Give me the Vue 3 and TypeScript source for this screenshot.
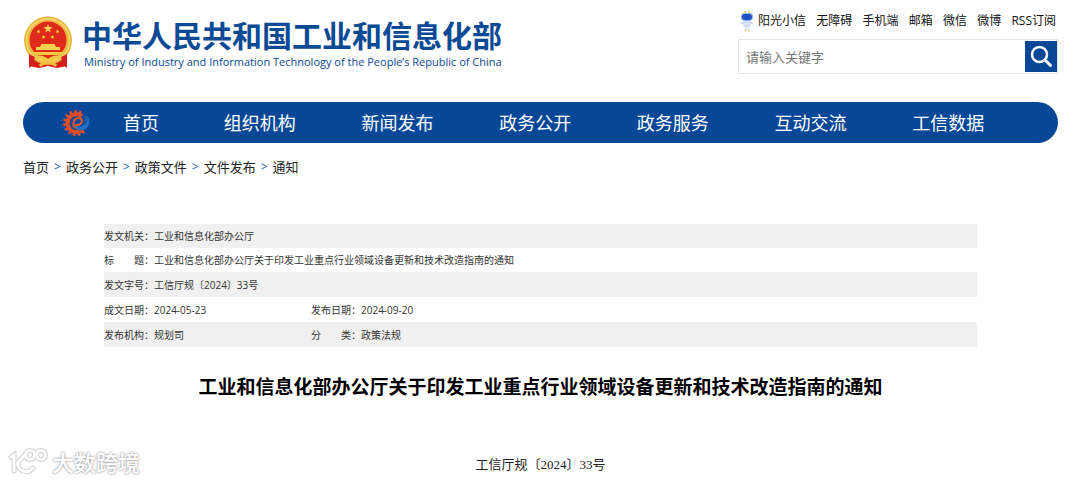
<script setup lang="ts">
interface Field { label: string; value: string }

const quickLinks: string[] = ['无障碍', '手机端', '邮箱', '微信', '微博', 'RSS订阅']
const navItems: string[] = ['首页', '组织机构', '新闻发布', '政务公开', '政务服务', '互动交流', '工信数据']
const crumbs: string[] = ['首页', '政务公开', '政策文件', '文件发布', '通知']
const title = '工业和信息化部办公厅关于印发工业重点行业领域设备更新和技术改造指南的通知'
const rows: Field[][] = [
  [{ label: '发文机关：', value: '工业和信息化部办公厅' }],
  [{ label: '标　　题：', value: title }],
  [{ label: '发文字号：', value: '工信厅规〔2024〕33号' }],
  [{ label: '成文日期：', value: '2024-05-23' }, { label: '发布日期：', value: '2024-09-20' }],
  [{ label: '发布机构：', value: '规划司' }, { label: '分　　类：', value: '政策法规' }],
]
const teeth: number[] = [10, 34, 58, 82, 106, 130, 154, 178, 202, 226, 250]
</script>

<template>
  <div class="page">
    <header class="header">
      <a class="brand" href="#">
        <svg class="emblem" viewBox="0 0 50 54" aria-hidden="true">
          <path d="M7 35L6 50l10 2 9-2 9 2 10-2-1-15z" fill="#d51f1c" />
          <circle cx="25" cy="24.500" r="24" fill="#e9b63c" />
          <circle cx="25" cy="24.500" r="21.500" fill="none" stroke="#f5d266" stroke-width="2" />
          <circle cx="25" cy="24" r="18.500" fill="#df2a1c" />
          <path d="M25 8l1.200 3.100 3.300.1-2.600 2 .9 3.200L25 14.600l-2.800 1.800.9-3.200-2.600-2 3.300-.1z" fill="#f8d94e" />
          <g fill="#f5cf47">
            <path id="star" d="M15.500 13.500l.6 1.300 1.400.1-1.100 1 .4 1.400-1.300-.8-1.300.8.400-1.400-1.100-1 1.400-.1z" />
            <use href="#star" x="19" />
            <use href="#star" x="5" y="5.500" />
            <use href="#star" x="14" y="5.500" />
          </g>
          <path d="M17 31l1.500-3h13l1.500 3h4v3H13v-3z" fill="#f6d34f" />
          <path d="M8 36h34l-2 3H10z" fill="#f3c943" />
          <path d="M6 38l6 3c-1 5-2 8-6 11zM44 38l-6 3c1 5 2 8 6 11z" fill="#d51f1c" />
          <path d="M11 41c6-3 10-1 14 2 4-3 8-5 14-2-3 1-5 5-9 5l-5-2-5 2c-4 0-6-4-9-5z" fill="#f6c84a" />
          <path d="M17 50c2-4 14-4 16 0" fill="none" stroke="#f0bd40" stroke-width="3" />
        </svg>
        <span class="names">
          <span class="name">中华人民共和国工业和信息化部</span>
          <span class="name-en">Ministry of Industry and Information Technology of the People’s Republic of China</span>
        </span>
      </a>
      <div class="tools">
        <div class="quick">
          <a class="robot-link" href="#">
            <svg class="robot" viewBox="0 0 14 22" aria-hidden="true">
              <path d="M2 3l1 1M5 1v2M9 1v2M12 3l-1 1" stroke="#f2c65d" stroke-width="1.500" />
              <rect x="1" y="3" width="12" height="8" rx="4" fill="#8fb4f0" />
              <rect x="2" y="4" width="10" height="6" rx="3" fill="#1c4fc0" />
              <path d="M4 11h6l1 5-2 1v3H7.500v-3h-1v3H5v-3l-2-1z" fill="#d3e0f7" />
              <path d="M4 12l-3 2M10 12l3 2" stroke="#bcd0f2" stroke-width="1.500" />
              <path d="M4.500 20.500h2M8 20.500h2" stroke="#f0cb74" stroke-width="1.500" />
            </svg>
            <span>阳光小信</span>
          </a>
          <a v-for="link in quickLinks" :key="link" href="#">{{ link }}</a>
        </div>
        <form class="search" @submit.prevent>
          <input type="text" placeholder="请输入关键字" aria-label="请输入关键字" />
          <button type="submit" aria-label="搜索">
            <svg viewBox="0 0 32 31" aria-hidden="true">
              <circle cx="14.500" cy="13.500" r="7.500" fill="none" stroke="#fff" stroke-width="2.500" />
              <path d="M20 19l5.500 5.500" stroke="#fff" stroke-width="3" stroke-linecap="round" />
            </svg>
          </button>
        </form>
      </div>
    </header>

    <nav class="nav">
      <svg class="gear" viewBox="0 0 28 28" aria-hidden="true">
        <g fill="#e0502a">
          <rect v-for="a in teeth" :key="a" x="12" y="1" width="2.500" height="5" :transform="`rotate(${-a + 30} 13 14)`" />
        </g>
        <path d="M19 7A9 9 0 1 0 18 22" fill="none" stroke="#dc4d28" stroke-width="4" />
        <path d="M10 16c5 1 9-1 9-4 0-4-6-4-8 0-2 5 1 8 6 8" fill="none" stroke="#e8572a" stroke-width="2" />
        <path d="M12 17c6 2 12-1 14-8 2 8-4 13-10 12-2-1-4-2-4-4z" fill="#1f74c4" />
        <path d="M20 8c3-2 6-1 6 2-1 2-3 4-5 5 2-3 2-5-1-7z" fill="#1a62b0" />
      </svg>
      <a v-for="item in navItems" :key="item" href="#">{{ item }}</a>
    </nav>

    <nav class="crumbs" aria-label="当前位置">
      <template v-for="(crumb, i) in crumbs" :key="crumb">
        <span v-if="i" class="sep">&gt;</span>
        <a href="#">{{ crumb }}</a>
      </template>
    </nav>

    <main class="article">
      <table class="meta">
        <tbody>
          <tr v-for="(row, i) in rows" :key="i">
            <template v-for="(field, j) in row" :key="field.label">
              <th scope="row">{{ field.label }}</th>
              <td :colspan="row.length === 1 ? 3 : 1" :class="{ first: row.length === 2 && j === 0 }">{{ field.value }}</td>
            </template>
          </tr>
        </tbody>
      </table>
      <h1>{{ title }}</h1>
      <p class="number">工信厅规〔2024〕33号</p>
    </main>

    <div class="watermark">
      <svg viewBox="0 0 40 28" aria-hidden="true">
        <g fill="none" stroke-linecap="round">
          <g stroke="#cfcfcf" stroke-width="5">
            <path d="M3 9l3-2v16M16 8l-6 6c-2 7 8 14 15 6" />
            <circle cx="22" cy="7" r="4.500" /><circle cx="33" cy="7" r="4.500" />
          </g>
          <g stroke="#fff" stroke-width="3">
            <path d="M3 9l3-2v16M16 8l-6 6c-2 7 8 14 15 6" />
            <circle cx="22" cy="7" r="4.500" /><circle cx="33" cy="7" r="4.500" />
          </g>
        </g>
      </svg>
      <span>大数跨境</span>
    </div>
  </div>
</template>

<style>
body { margin: 0; background: #fff; }
</style>

<style scoped>
.page {
  position: relative;
  padding: 0 22px 0 23px;
  font-family: "Open Sans", "Noto Sans CJK SC", sans-serif;
  color: #222;
}
a { color: inherit; text-decoration: none; }
.header { display: flex; justify-content: space-between; padding-top: 11px; }
.brand { display: flex; gap: 9px; padding-top: 5px; color: #0b4a95; }
.emblem { width: 50px; height: 54px; }
.names { display: flex; flex-direction: column; white-space: nowrap; }
.name { font-size: 30px; line-height: 40px; font-weight: 700; }
.name-en { padding-left: 2px; font: 500 11px/12px "Open Sans", sans-serif; }
.tools { width: 320px; }
.quick {
  display: flex;
  justify-content: space-between;
  align-items: center;
  height: 20px;
  padding: 0 2px;
  font-size: 12px;
  line-height: 20px;
  color: #111;
  white-space: nowrap;
}
.robot-link { display: flex; align-items: center; gap: 4px; }
.robot { width: 14px; height: 22px; }
.search {
  display: flex;
  box-sizing: border-box;
  height: 35px;
  margin-top: 8px;
  padding: 1px 0 1px 1px;
  border: 1px solid #e6e6e6;
}
.search input {
  flex: 1;
  min-width: 0;
  padding: 0 6px;
  border: 0;
  outline: 0;
  font: 13px "Open Sans", "Noto Sans CJK SC", sans-serif;
}
.search input::placeholder { color: #757575; }
.search button { width: 32px; padding: 0; border: 0; background: #064797; }
.search button svg { display: block; width: 32px; height: 31px; }
.nav {
  display: grid;
  grid-template-columns: 28px 100px repeat(6, 1fr);
  align-items: center;
  height: 41px;
  margin-top: 28px;
  padding: 0 41px 0 40px;
  border-radius: 21px;
  background: #064797;
  color: #fff;
  font-size: 18px;
  line-height: 40px;
  text-align: center;
}
.gear { width: 28px; height: 28px; }
.crumbs {
  display: flex;
  gap: 5px;
  margin-top: 14px;
  font-size: 13px;
  line-height: 20px;
}
.sep { color: #2464ac; font-size: 12px; }
.article { padding: 0 81px; }
.meta {
  width: 100%;
  margin-top: 47px;
  border-collapse: collapse;
  font-size: 10px;
  line-height: 16px;
  color: #333;
}
.meta tr { height: 25px; }
.meta tr:nth-child(-n+2) { height: 24px; }
.meta tr:nth-child(odd) { background: #f0f0f0; }
.meta th, .meta td { padding: 0; font-weight: 400; text-align: left; }
.meta th { width: 50px; white-space: nowrap; }
.meta td.first { width: 157px; }
h1 {
  margin: 25px 0 0;
  font-size: 19px;
  line-height: 30px;
  font-weight: 700;
  text-align: center;
  color: #000;
}
.number {
  margin: 53px 0 0;
  padding-bottom: 7px;
  font: 13px/20px "Liberation Serif", "Noto Sans CJK SC", serif;
  text-align: center;
}
.watermark {
  position: absolute;
  left: 8px;
  bottom: 5px;
  display: flex;
  align-items: center;
  gap: 4px;
  color: #fff;
  font-size: 22px;
  line-height: 30px;
  font-weight: 500;
  text-shadow: 0 0 2px #999, 0 0 3px #bbb;
}
.watermark svg { width: 40px; height: 28px; }
</style>
